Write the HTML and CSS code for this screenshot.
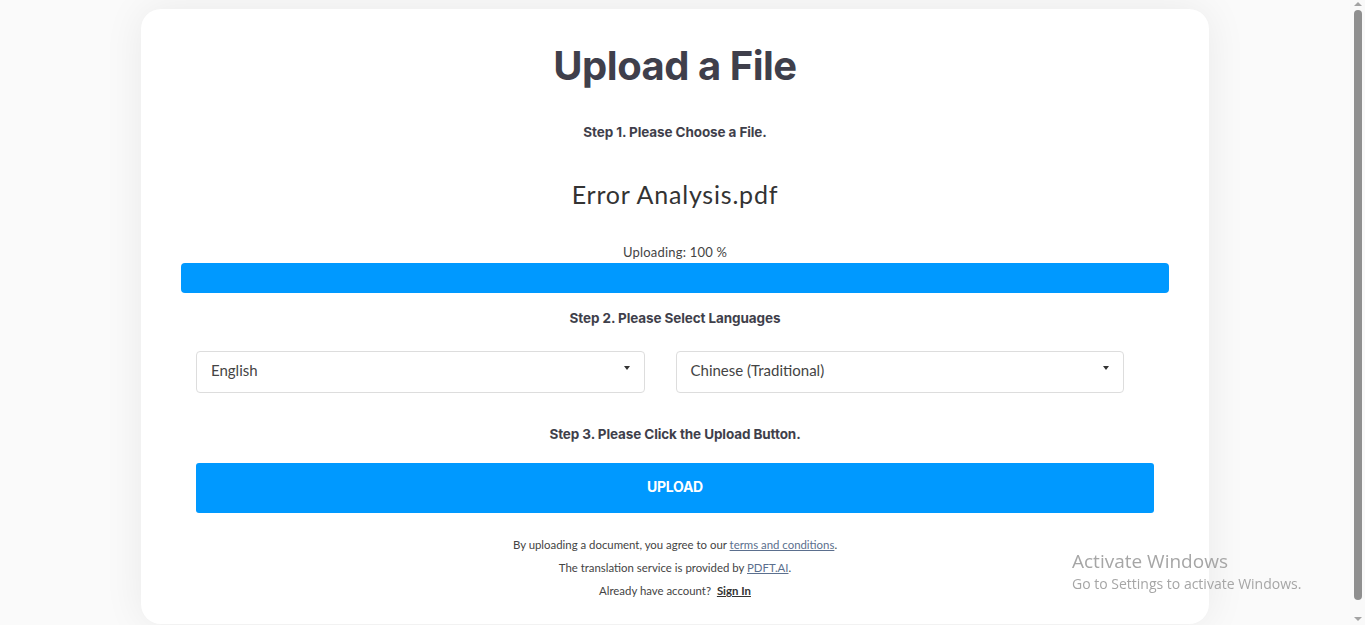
FILE: index.html
```html
<!DOCTYPE html>
<html lang="en">
<head>
    <meta charset="UTF-8">
    <meta name="viewport" content="width=device-width, initial-scale=1.0">
    <title>Upload a File</title>
    <link rel="stylesheet" href="styles.css">
</head>
<body>
    <!-- Upload card -->
    <div class="card">
        <h1 class="title">Upload a File</h1>

        <p class="step">Step 1. Please Choose a File.</p>
        <div class="file-name">Error Analysis.pdf</div>

        <p class="progress-label">Uploading: 100 %</p>
        <div class="progress">
            <div class="progress-bar" style="width: 100%"></div>
        </div>

        <p class="step step-2">Step 2. Please Select Languages</p>
        <div class="lang-row">
            <div class="select">
                <span>English</span>
                <span class="caret"></span>
            </div>
            <div class="select">
                <span>Chinese (Traditional)</span>
                <span class="caret"></span>
            </div>
        </div>

        <p class="step step-3">Step 3. Please Click the Upload Button.</p>
        <button class="upload-btn">UPLOAD</button>

        <div class="notes">
            <p>By uploading a document, you agree to our <a href="#" class="link">terms and conditions</a>.</p>
            <p>The translation service is provided by <a href="#" class="link">PDFT.AI</a>.</p>
            <p>Already have account?&nbsp; <a href="#" class="sign-in">Sign In</a></p>
        </div>
    </div>

    <!-- Windows watermark -->
    <div class="watermark">
        <div class="wm-title">Activate Windows</div>
        <div class="wm-sub">Go to Settings to activate Windows.</div>
    </div>

    <!-- Page scrollbar -->
    <div class="scrollbar">
        <span class="arrow-up"></span>
        <span class="thumb"></span>
        <span class="arrow-down"></span>
    </div>
</body>
</html>
```

FILE: styles.css
```css
body {
    margin: 0;
    padding: 9px 15px 20px 0;
    background-color: #fafafa;
    font-family: Lato, "Noto Sans", sans-serif;
    color: #444;
}

.card {
    width: 988px;
    margin: 0 auto;
    padding: 14px 40px 17px;
    background-color: #fff;
    border-radius: 20px;
    box-shadow: 0 0 40px rgba(0, 0, 0, 0.07);
    display: flex;
    flex-direction: column;
    align-items: center;
    text-align: center;
}

.title {
    font-family: Inter, sans-serif;
    font-size: 40px;
    font-weight: 700;
    letter-spacing: -0.5px;
    color: #3f3f4b;
    margin: 19px 0 0;
    line-height: 48px;
}

.step {
    font-family: Inter, sans-serif;
    font-size: 13.5px;
    font-weight: 700;
    color: #3f3f4b;
    margin: 34px 0 0;
    letter-spacing: -0.1px;
}

.file-name {
    font-size: 25px;
    letter-spacing: 0.8px;
    color: #333;
    margin-top: 39px;
    line-height: 30px;
}

.progress-label {
    font-size: 13px;
    letter-spacing: 0.2px;
    color: #444;
    margin: 35px 0 3px;
    line-height: 16px;
}

.progress {
    width: 100%;
    height: 30px;
    border-radius: 4px;
    background-color: #e9ecef;
    overflow: hidden;
}

.progress-bar {
    height: 100%;
    background-color: #0099ff;
}

.step-2 {
    margin-top: 17px;
}

.lang-row {
    width: 928px;
    padding-right: 30px;
    display: grid;
    grid-template-columns: 1fr 1fr;
    gap: 31px;
    margin-top: 25px;
}

.select {
    height: 40px;
    border: 1px solid #ddd;
    border-radius: 4px;
    display: flex;
    align-items: center;
    justify-content: space-between;
    padding: 0 14px 4px 14px;
    box-sizing: border-box;
    height: 42px;
    font-size: 15px;
    color: #444;
    text-align: left;
}

.caret {
    width: 0;
    height: 0;
    border-left: 3.5px solid transparent;
    border-right: 3.5px solid transparent;
    border-top: 4px solid #333;
    margin-bottom: 4px;
}

.step-3 {
    margin-top: 33px;
}

.upload-btn {
    width: 958px;
    height: 50px;
    margin-top: 21px;
    padding-bottom: 4px;
    border: none;
    border-radius: 3px;
    background-color: #0099ff;
    color: #fff;
    font-family: Inter, sans-serif;
    font-size: 14px;
    font-weight: 700;
    letter-spacing: -0.3px;
    cursor: pointer;
}

.notes {
    margin-top: 25px;
    font-size: 11.4px;
    color: #444;
}

.notes p {
    margin: 0 0 9px;
    line-height: 14px;
}

.link {
    color: #5b6f8e;
}

.sign-in {
    color: #333;
    font-weight: 700;
}

.watermark {
    position: fixed;
    left: 1072px;
    top: 549px;
    color: #a6a6a6;
    font-family: "Open Sans", "Noto Sans", sans-serif;
    pointer-events: none;
}

.wm-title {
    font-size: 19px;
    line-height: 24px;
}

.wm-sub {
    font-size: 14px;
    line-height: 20px;
    margin-top: 1px;
}

/* fake classic scrollbar */
.scrollbar {
    position: fixed;
    top: 0;
    right: 0;
    bottom: 0;
    width: 15px;
    background-color: #f9f9f9;
    display: flex;
    flex-direction: column;
    align-items: center;
    padding: 2px 0 4px;
    box-sizing: border-box;
}

.arrow-up,
.arrow-down {
    width: 0;
    height: 0;
    border-left: 4px solid transparent;
    border-right: 4px solid transparent;
}

.arrow-up {
    border-bottom: 4px solid #a3a3a3;
}

.arrow-down {
    border-top: 4px solid #a3a3a3;
}

.thumb {
    flex: 1;
    width: 8px;
    margin: 4px 0 17px;
    border-radius: 4px;
    background-color: #8f8f8f;
}
```
